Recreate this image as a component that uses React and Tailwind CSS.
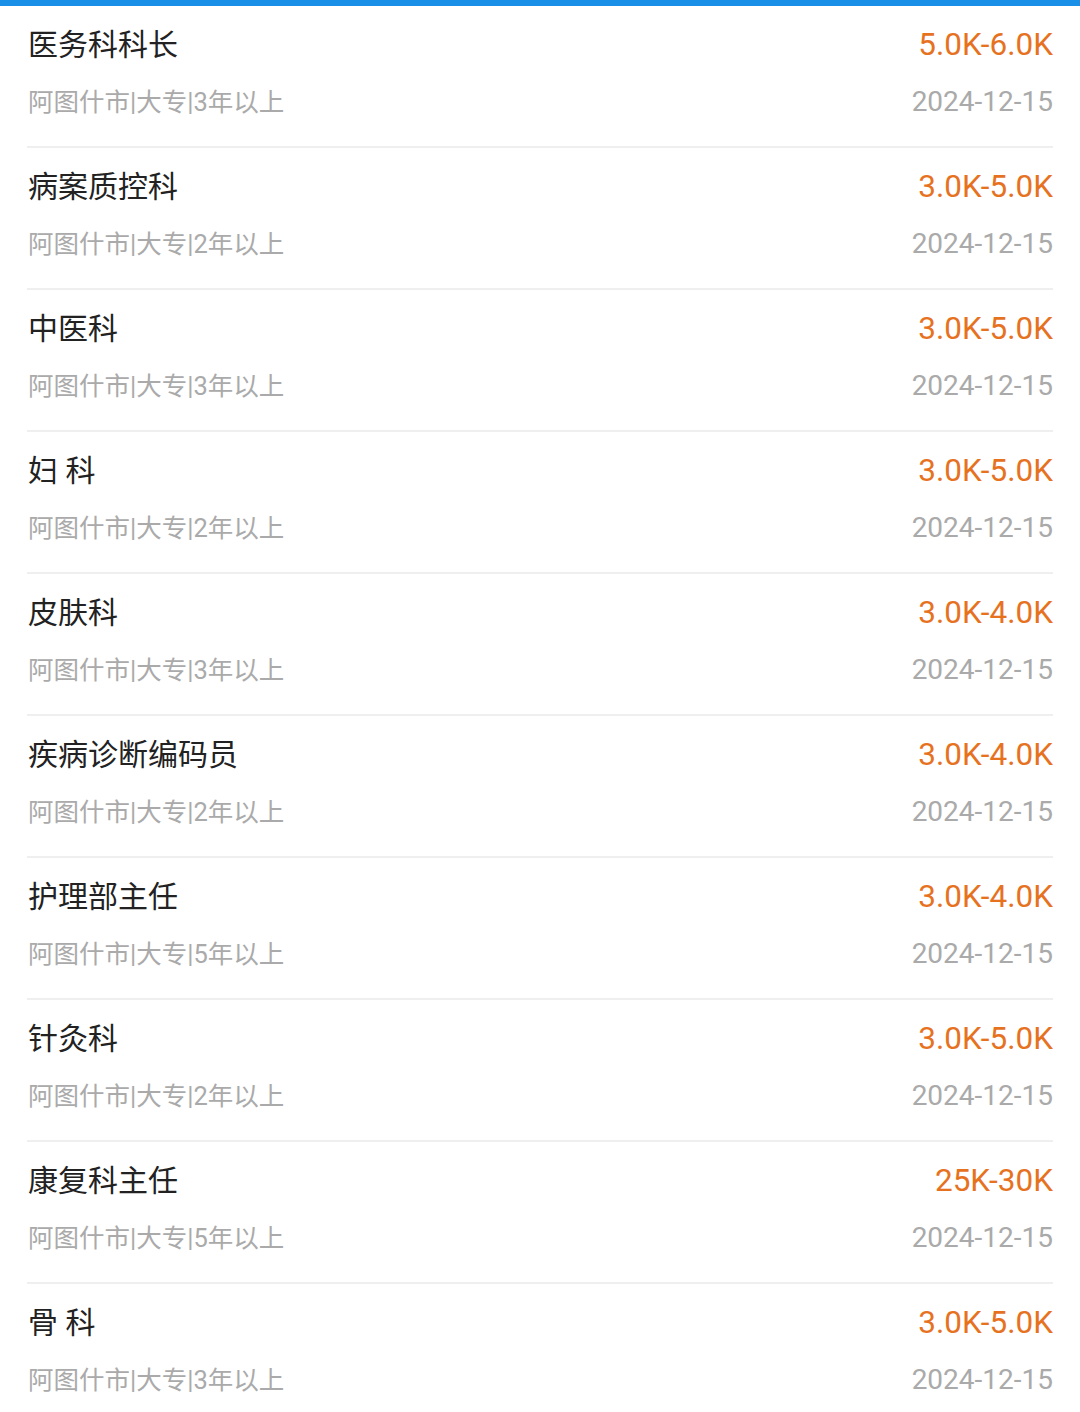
import React from "react";

const jobs = [
  { title: "医务科科长", salary: "5.0K-6.0K", info: "阿图什市|大专|3年以上" },
  { title: "病案质控科", salary: "3.0K-5.0K", info: "阿图什市|大专|2年以上" },
  { title: "中医科", salary: "3.0K-5.0K", info: "阿图什市|大专|3年以上" },
  { title: "妇 科", salary: "3.0K-5.0K", info: "阿图什市|大专|2年以上" },
  { title: "皮肤科", salary: "3.0K-4.0K", info: "阿图什市|大专|3年以上" },
  { title: "疾病诊断编码员", salary: "3.0K-4.0K", info: "阿图什市|大专|2年以上" },
  { title: "护理部主任", salary: "3.0K-4.0K", info: "阿图什市|大专|5年以上" },
  { title: "针灸科", salary: "3.0K-5.0K", info: "阿图什市|大专|2年以上" },
  { title: "康复科主任", salary: "25K-30K", info: "阿图什市|大专|5年以上" },
  { title: "骨 科", salary: "3.0K-5.0K", info: "阿图什市|大专|3年以上" },
];

const App = () => {
  return (
    <div className="min-h-[1412px] bg-white font-['Roboto','Noto_Sans_CJK_SC',sans-serif]">
      <div className="h-[6px] bg-[#1a8fe8]" />
      <div className="px-[27px]">
        {jobs.map((job, idx) => (
          <div key={idx} className="pt-[19px] pb-[26px] border-b-2 border-[#efefef]">
            <div className="flex items-center justify-between h-[40px]">
              <span className="text-[30px] leading-[40px] text-[#222] pl-px">{job.title}</span>
              <span className="text-[31.5px] leading-[40px] text-[#e6721f]">{job.salary}</span>
            </div>
            <div className="flex items-center justify-between h-[36px] mt-[19px]">
              <span className="text-[25.5px] leading-[36px] text-[#aaaaaa] pl-px">{job.info}</span>
              <span className="text-[28px] leading-[36px] text-[#aaaaaa]">2024-12-15</span>
            </div>
          </div>
        ))}
      </div>
    </div>
  );
};

export default App;
